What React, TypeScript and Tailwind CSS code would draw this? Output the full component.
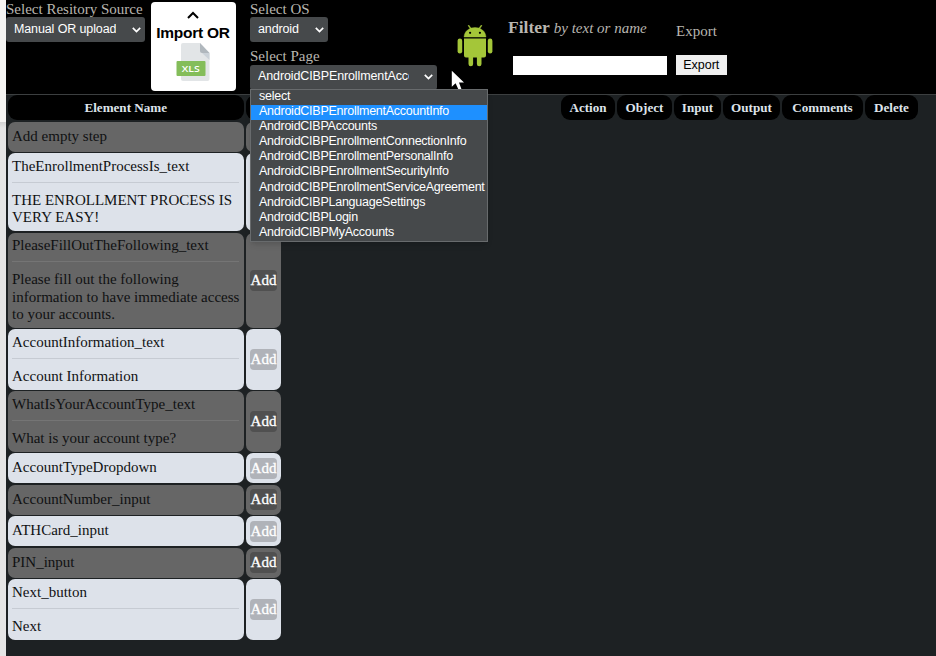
const serif = "font-['Liberation_Serif','Times_New_Roman',serif]";
const sans = "font-['Liberation_Sans',Arial,sans-serif]";

type Row = { name: string; text?: string; h: number; light?: boolean; add?: boolean };

const rows: Row[] = [
  { name: 'Add empty step', h: 31.5 },
  { name: 'TheEnrollmentProcessIs_text', text: 'THE ENROLLMENT PROCESS IS VERY EASY!', h: 79.5, light: true },
  { name: 'PleaseFillOutTheFollowing_text', text: 'Please fill out the following information to have immediate access to your accounts.', h: 96.5, add: true },
  { name: 'AccountInformation_text', text: 'Account Information', h: 62, light: true, add: true },
  { name: 'WhatIsYourAccountType_text', text: 'What is your account type?', h: 62, add: true },
  { name: 'AccountTypeDropdown', h: 31.5, light: true, add: true },
  { name: 'AccountNumber_input', h: 31.5, add: true },
  { name: 'ATHCard_input', h: 31.5, light: true, add: true },
  { name: 'PIN_input', h: 31.5, add: true },
  { name: 'Next_button', text: 'Next', h: 62, light: true, add: true },
];

const pages = [
  'select',
  'AndroidCIBPEnrollmentAccountInfo',
  'AndroidCIBPAccounts',
  'AndroidCIBPEnrollmentConnectionInfo',
  'AndroidCIBPEnrollmentPersonalInfo',
  'AndroidCIBPEnrollmentSecurityInfo',
  'AndroidCIBPEnrollmentServiceAgreement',
  'AndroidCIBPLanguageSettings',
  'AndroidCIBPLogin',
  'AndroidCIBPMyAccounts',
];

const heads: [string, string][] = [
  ['Action', 'w-[54px]'],
  ['Object', 'w-[55px]'],
  ['Input', 'w-[47px]'],
  ['Output', 'w-[57px]'],
  ['Comments', 'w-[81px]'],
  ['Delete', 'w-[53px]'],
];

function Select({ label, width }: { label: string; width: string }) {
  return (
    <div className={`flex h-[25px] items-center justify-between rounded-[3px] bg-[#46494b] pl-2 pr-1 text-[12.5px] tracking-[-0.12px] text-white ${sans} ${width}`}>
      <span className="overflow-hidden whitespace-nowrap">{label}</span>
      <svg width="9" height="6" viewBox="0 0 9 6" className="shrink-0" fill="none" stroke="white" strokeWidth="1.7">
        <path d="M0.8 0.8 4.5 4.5 8.2 0.8" />
      </svg>
    </div>
  );
}

function XlsIcon() {
  return (
    <svg width="34" height="39" viewBox="0 0 34 39">
      <path d="M7 0H24L33.5 10V36a2 2 0 0 1-2 2H7a2 2 0 0 1-2-2V2a2 2 0 0 1 2-2Z" fill="#e2e5e7" />
      <path d="M24 0 33.5 10H26a2 2 0 0 1-2-2Z" fill="#b0b7bd" />
      <path d="M26 10H33.5V17Z" fill="#cad1d8" />
      <rect x="0.5" y="18" width="29" height="15" rx="1" fill="#84bd5a" />
      <text x="14.8" y="29" textAnchor="middle" fill="white" fontSize="9.5" fontWeight="600" fontFamily="Open Sans" textLength="18" lengthAdjust="spacingAndGlyphs">XLS</text>
    </svg>
  );
}

function AndroidIcon() {
  return (
    <svg width="36" height="42" viewBox="0 0 36 42" fill="#a4c639">
      <path d="M7 12C7.200 8 9.500 5 13 3.500L11 .6 11.800 .1 14 3.100Q18 1.900 22 3.100L24.200 .1 25 .6 23 3.500C26.500 5 28.800 8 29 12Z" stroke="#a4c639" strokeWidth="0.4" />
      <circle cx="13.100" cy="7.800" r="1.100" fill="black" />
      <circle cx="22.900" cy="7.800" r="1.100" fill="black" />
      <path d="M7 13.500H29V30.500a2 2 0 0 1-2 2H24.500V39a2.300 2.300 0 0 1-4.600 0V32.500H16.100V39a2.300 2.300 0 0 1-4.600 0V32.500H9a2 2 0 0 1-2-2Z" />
      <rect x="0.600" y="13.500" width="4.600" height="15" rx="2.300" />
      <rect x="30.800" y="13.500" width="4.600" height="15" rx="2.300" />
    </svg>
  );
}

export default function App() {
  return (
    <div className={`relative flex h-[656px] w-[936px] overflow-hidden bg-[#1d2123] text-[15px] leading-[17.25px] ${serif}`}>
      <div className="flex w-1.5 shrink-0 flex-col">
        <div className="h-[122px] bg-[#f5f4f2]" />
        <div className="grow bg-gradient-to-b from-[#d2d2d2] via-[#e5e5e5] via-[6px] to-[#e5e5e5]" />
      </div>
      <div className="flex min-w-0 grow flex-col">
        <header className="flex h-[95px] shrink-0 items-start border-b border-[#3c3f40] bg-black text-[#b9b6b0]">
          <div className="w-[144.500px] shrink-0">
            <div className="h-[17px] whitespace-nowrap pt-px">Select Resitory Source</div>
            <Select label="Manual OR upload" width="w-[139px]" />
          </div>
          <div className={`mt-[2px] flex h-[88.500px] w-[85px] shrink-0 flex-col items-center rounded-[4px] bg-white text-black ${sans}`}>
            <svg width="12" height="8" viewBox="0 0 12 8" className="mt-[9px]" fill="none" stroke="black" strokeWidth="2">
              <path d="M1 7 6 2 11 7" />
            </svg>
            <div className="mt-[4px] h-[20px] whitespace-nowrap text-[15.500px] font-bold leading-[20px] tracking-[-0.27px]">Import OR</div>
            <div><XlsIcon /></div>
          </div>
          <div className="ml-[14.500px] w-[188px] shrink-0">
            <div className="h-[17px] pt-px">Select OS</div>
            <Select label="android" width="w-[78px]" />
            <div className="mt-[5px] h-[17.500px] pt-px">Select Page</div>
            <div className="[&_span]:w-[152px] [&>div]:justify-start [&_svg]:ml-[15px]">
              <Select label="AndroidCIBPEnrollmentAccountInfo" width="w-[187px]" />
            </div>
          </div>
          <div className="ml-[19px] mt-[25px] w-[50px] shrink-0"><AndroidIcon /></div>
          <div className="ml-px w-[168px] shrink-0">
            <div className="mt-[19px] flex h-[20px] items-baseline whitespace-nowrap">
              <b className="text-[17.500px]">Filter</b>
              <i className="ml-1">by text or name</i>
            </div>
            <div className="ml-[5px] mt-[17px] h-[19px] w-[153.500px] bg-white" />
          </div>
          <div>
            <div className="mt-[23px] h-[17px]">Export</div>
            <div className={`mt-[15px] flex h-[20px] w-[50.500px] items-center justify-center bg-[#efefef] pt-px text-[12.5px] text-black ${sans}`}>Export</div>
          </div>
        </header>
        <main className="flex grow items-start">
          <div className="pl-[1.500px]">
            <div className="flex h-[26.500px] gap-[2px] pb-[1.500px] text-[13.100px] font-bold text-[#dee3ea]">
              <div className="flex w-[236.500px] items-center justify-center rounded-[9px] bg-black">Element Name</div>
              <div className="w-[35px] rounded-[9px] bg-black" />
            </div>
            {rows.map((r) => {
              const bg = r.light ? 'bg-[#dde2ea]' : 'bg-[#666666]';
              return (
                <div key={r.name} className="flex gap-[2px] pb-[1.500px] text-[#101112]" style={{ height: r.h }}>
                  <div className={`w-[236.500px] rounded-[7px] pl-[4.500px] pr-[3px] ${r.text ? 'pt-[4.500px]' : 'flex items-center'} ${bg}`}>
                    <div>{r.name}</div>
                    {r.text && (
                      <>
                        <div className={`mb-[9px] mr-[2px] mt-[7.200px] h-px ${r.light ? 'bg-[#c6cbd3]' : 'bg-[#757575]'}`} />
                        <div>{r.text}</div>
                      </>
                    )}
                  </div>
                  <div className={`flex w-[35px] items-center justify-center rounded-[7px] ${bg}`}>
                    {r.add && (
                      <span className={`flex h-[21px] w-[27px] items-center justify-center rounded-[4px] pt-px text-white [-webkit-text-stroke:0.3px_white] ${r.light ? 'bg-[#b0b3b9]' : 'bg-[#505050]'}`}>
                        Add
                      </span>
                    )}
                  </div>
                </div>
              );
            })}
          </div>
          <div className="ml-[280px] flex h-[25px] gap-[2px] text-[13.100px] font-bold text-[#dee3ea]">
            {heads.map(([label, w]) => (
              <div key={label} className={`flex shrink-0 items-center justify-center rounded-[9px] bg-black ${w}`}>{label}</div>
            ))}
          </div>
        </main>
      </div>
      <ul className={`absolute left-[250px] top-[89px] h-[153px] w-[237.500px] border border-[#686b6d] bg-[#46494b] text-[12.500px] leading-[12.500px] tracking-[-0.25px] text-white shadow-md ${sans}`}>
        {pages.map((p, i) => (
          <li key={p} className={`h-[15.100px] whitespace-nowrap pl-2 ${i === 1 ? 'bg-[#1e90ff]' : ''}`}>{p}</li>
        ))}
      </ul>
      <svg className="absolute left-[451px] top-[70px]" width="14" height="19" viewBox="0 0 14 19" fill="white">
        <path d="M.8 .8V16.800L4.600 13.300 7.200 19H10.400L8 12.400H13Z" />
      </svg>
    </div>
  );
}
